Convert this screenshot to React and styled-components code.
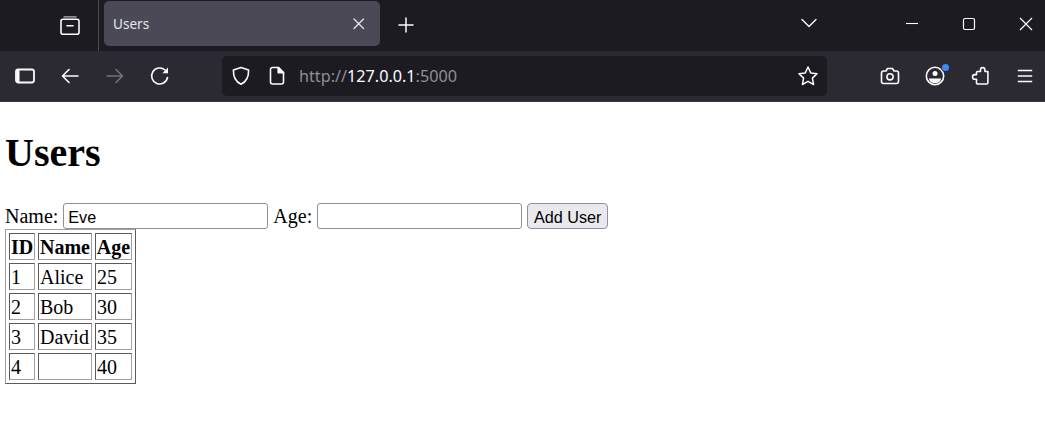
import styled, { createGlobalStyle } from "styled-components";

const users = [
  { id: 1, name: "Alice", age: 25 },
  { id: 2, name: "Bob", age: 30 },
  { id: 3, name: "David", age: 35 },
  { id: 4, name: "", age: 40 },
];

const Icon = ({ size = 20, children, ...rest }) => (
  <svg width={size} height={size} viewBox="0 0 20 20" fill="none" stroke="currentColor" strokeWidth="1.6" strokeLinecap="round" strokeLinejoin="round" {...rest}>
    {children}
  </svg>
);

const App = () => {
  return (
    <>
      <GlobalStyle />
      <Browser>
        <TabStrip>
          <ViewSlot>
            <Icon>
              <path d="M4 .8h12" strokeWidth="1.3" opacity="0.7" />
              <rect x="1" y="3.2" width="18" height="15" rx="2" />
              <path d="M7 9.8h6" />
            </Icon>
          </ViewSlot>
          <Tab>
            <TabTitle>Users</TabTitle>
            <Icon size={14} viewBox="0 0 14 14" strokeWidth="1.3">
              <path d="M2 2l9.5 9.5M11.5 2L2 11.5" />
            </Icon>
          </Tab>
          <NewTab>
            <Icon size={18} viewBox="0 0 18 18" strokeWidth="1.5">
              <path d="M9 2v14M2 9h14" />
            </Icon>
          </NewTab>
          <ListTabs>
            <Icon size={18} viewBox="0 0 18 18" strokeWidth="1.4">
              <path d="M2 5.5l7 7 7-7" />
            </Icon>
          </ListTabs>
          <WindowButton>
            <Icon size={14} viewBox="0 0 14 14" strokeWidth="1.1">
              <path d="M1 6.5h12" strokeLinecap="butt" />
            </Icon>
          </WindowButton>
          <WindowButton>
            <Icon size={14} viewBox="0 0 14 14" strokeWidth="1.2">
              <rect x="1.5" y="1.5" width="11" height="11" rx="1.5" />
            </Icon>
          </WindowButton>
          <WindowButton>
            <Icon size={14} viewBox="0 0 14 14" strokeWidth="1.2">
              <path d="M1 1l12 12M13 1L1 13" strokeLinecap="butt" />
            </Icon>
          </WindowButton>
        </TabStrip>
        <Toolbar>
          <ToolButton>
            <Icon strokeWidth="1.8">
              <rect x="1" y="3.5" width="18" height="13" rx="2.2" />
              <rect x="1.5" y="4" width="3" height="12" fill="currentColor" stroke="none" />
            </Icon>
          </ToolButton>
          <ToolButton>
            <Icon>
              <path d="M18 10H2.5M9 3.5L2.5 10 9 16.5" />
            </Icon>
          </ToolButton>
          <ToolButton $disabled>
            <Icon>
              <path d="M2 10h15.5M11 3.5l6.5 6.5-6.5 6.5" />
            </Icon>
          </ToolButton>
          <ToolButton>
            <Icon>
              <path d="M17.5 11.5A8 8 0 1 1 15 4L17 6.3" />
              <path d="M18 1.6v5.6h-5.6z" fill="currentColor" strokeWidth="0" />
            </Icon>
          </ToolButton>
          <UrlBar>
            <UrlIcon>
              <Icon>
                <path d="M10 1.5l7.6 2.6c.2 6.6-1.8 11.6-7.6 14.2C4.2 15.7 2.2 10.7 2.4 4.1z" />
              </Icon>
            </UrlIcon>
            <UrlIcon>
              <Icon>
                <path d="M3.5 3.5a2 2 0 0 1 2-2h6l5 5v9.5a2 2 0 0 1-2 2h-9a2 2 0 0 1-2-2z" />
                <path d="M11.2 1.5l5.3 5.3h-5.3z" fill="currentColor" />
              </Icon>
            </UrlIcon>
            <UrlText>
              <Dim>http://</Dim>127.0.0.1<Dim>:5000</Dim>
            </UrlText>
            <StarIcon>
              <Icon size={22} viewBox="0 0 22 22" strokeWidth="1.5">
                <path d="M11 2l2.7 5.9 6.3.8-4.6 4.4 1.2 6.4L11 16.3l-5.6 3.2 1.2-6.4L2 8.7l6.3-.8z" />
              </Icon>
            </StarIcon>
          </UrlBar>
          <Actions>
            <ToolButton>
              <Icon>
                <path d="M1.5 7a2 2 0 0 1 2-2h2.5l1.5-2.5h5L14 5h2.5a2 2 0 0 1 2 2v8.5a2 2 0 0 1-2 2h-13a2 2 0 0 1-2-2z" />
                <circle cx="10" cy="10.8" r="3.1" />
              </Icon>
            </ToolButton>
            <ToolButton>
              <Icon>
                <circle cx="10" cy="10" r="8.7" />
                <circle cx="10" cy="7.5" r="2.5" fill="currentColor" stroke="none" />
                <path d="M3.8 12.5h12.4a6.4 6.4 0 0 1-12.4 0z" fill="currentColor" stroke="none" />
              </Icon>
              <Badge />
            </ToolButton>
            <ToolButton>
              <Icon>
                <path d="M7.5 5.5h3V3.8a2.2 2.2 0 0 1 4.4 0v1.7h3v11.2a1.3 1.3 0 0 1-1.3 1.3H7.8a1.3 1.3 0 0 1-1.3-1.3v-3.5H4.8a2.3 2.3 0 0 1 0-4.6h1.7V6.5a1 1 0 0 1 1-1z" />
              </Icon>
            </ToolButton>
            <ToolButton>
              <Icon>
                <path d="M2.8 4.5h14.4M2.8 10h14.4M2.8 15.5h14.4" strokeWidth="1.4" strokeLinecap="butt" />
              </Icon>
            </ToolButton>
          </Actions>
        </Toolbar>
      </Browser>
      <Page>
        <Heading>Users</Heading>
        <UserForm onSubmit={(e) => e.preventDefault()}>
          <label htmlFor="name">Name:</label>
          <TextInput id="name" type="text" defaultValue="Eve" />
          <label htmlFor="age">Age:</label>
          <TextInput id="age" type="text" />
          <AddButton type="submit">Add User</AddButton>
        </UserForm>
        <UserTable>
          <thead>
            <tr>
              <Head $width={26}>ID</Head>
              <Head $width={54}>Name</Head>
              <Head $width={37}>Age</Head>
            </tr>
          </thead>
          <tbody>
            {users.map((user) => (
              <tr key={user.id}>
                <Cell>{user.id}</Cell>
                <Cell>{user.name}</Cell>
                <Cell>{user.age}</Cell>
              </tr>
            ))}
          </tbody>
        </UserTable>
      </Page>
    </>
  );
};

export default App;

const GlobalStyle = createGlobalStyle`
  html, body {
    margin: 0;
    background: #ffffff;
    overflow: hidden;
  }
  body {
    font-family: "Liberation Serif", "Times New Roman", serif;
    font-size: 20px;
    color: #000000;
  }
`;

const Browser = styled.div`
  width: 1045px;
  font-family: "Noto Sans", "Open Sans", sans-serif;
`;

const TabStrip = styled.div`
  height: 51px;
  background: #1c1b22;
  display: flex;
  align-items: flex-start;
  color: #fbfbfe;
`;

const ViewSlot = styled.div`
  flex: none;
  width: 99px;
  height: 51px;
  padding-left: 42px;
  box-sizing: border-box;
  border-right: 1px solid #4a4952;
  display: flex;
  align-items: center;
  justify-content: center;
`;

const Tab = styled.div`
  flex: none;
  width: 276px;
  height: 45px;
  margin: 1px 0 0 5px;
  padding: 0 14px 0 9px;
  box-sizing: border-box;
  background: #4a4955;
  border-radius: 5px;
  display: flex;
  align-items: center;
  justify-content: space-between;
  color: #e6e6ea;
`;

const TabTitle = styled.span`
  font-size: 13.6px;
`;

const NewTab = styled.div`
  flex: none;
  display: flex;
  margin: 16px 0 0 17px;
`;

const ListTabs = styled.div`
  flex: none;
  display: flex;
  margin: 14px 44px 0 385px;
`;

const WindowButton = styled.div`
  flex: none;
  display: flex;
  margin: 17px 0 0 43px;
`;

const Toolbar = styled.div`
  height: 51px;
  padding-left: 2.5px;
  box-sizing: border-box;
  background: #2b2a33;
  border-bottom: 1px solid #3a3944;
  display: flex;
  align-items: center;
  color: #fbfbfe;
  overflow: hidden;
`;

const ToolButton = styled.div`
  position: relative;
  flex: none;
  width: 45px;
  height: 40px;
  display: flex;
  align-items: center;
  justify-content: center;
  color: ${(props) => (props.$disabled ? "#72717a" : "#fbfbfe")};
`;

const Badge = styled.span`
  position: absolute;
  top: 8px;
  right: 9px;
  width: 7px;
  height: 7px;
  border-radius: 50%;
  background: #3b8cec;
  box-shadow: 0 0 0 1px #2b2a33;
`;

const UrlBar = styled.div`
  flex: none;
  width: 605px;
  height: 40px;
  margin-left: 39.5px;
  padding: 0 8px 0 9px;
  box-sizing: border-box;
  border-radius: 5px;
  background: #1c1b22;
  display: flex;
  align-items: center;
`;

const UrlIcon = styled.span`
  width: 20px;
  height: 20px;
  display: flex;

  & + & {
    margin-left: 16px;
  }
`;

const UrlText = styled.span`
  margin-left: 12px;
  font-size: 16.2px;
  color: #fbfbfe;
  flex: 1;
`;

const Dim = styled.span`
  color: #8f8e94;
`;

const StarIcon = styled.span`
  width: 22px;
  height: 22px;
  display: flex;
`;

const Actions = styled.div`
  flex: none;
  margin-left: 40.5px;
  display: flex;
`;

const Page = styled.main`
  padding: 0 5px;
`;

const Heading = styled.h1`
  margin: 0;
  padding: 28px 0 0;
  height: 101px;
  box-sizing: border-box;
  font-size: 40px;
  line-height: 46px;
  font-weight: bold;
`;

const UserForm = styled.form`
  height: 26px;
  display: flex;
  align-items: center;
  gap: 5px;
`;

const TextInput = styled.input`
  width: 205px;
  height: 26px;
  padding: 3px 4px 0;
  box-sizing: border-box;
  border: 1px solid #8f8f9d;
  border-radius: 3px;
  background: #ffffff;
  font-family: "Liberation Sans", Arial, sans-serif;
  font-size: 16.2px;
  color: #000000;
  outline: none;
`;

const AddButton = styled.button`
  width: 81px;
  height: 26px;
  padding: 3px 0 0;
  box-sizing: border-box;
  border: 1px solid #8f8f9d;
  border-radius: 4px;
  background: #e9e9ed;
  font-family: "Liberation Sans", Arial, sans-serif;
  font-size: 16.2px;
  color: #000000;
`;

const UserTable = styled.table`
  border-collapse: separate;
  border-spacing: 3px;
  border: 1px solid;
  border-color: #a0a0a0 #5a5a5a #5a5a5a #a0a0a0;
`;

const Cell = styled.td`
  height: 27px;
  padding: 2px 1px 0;
  box-sizing: border-box;
  border: 1px solid;
  border-color: #5a5a5a #a0a0a0 #a0a0a0 #5a5a5a;
  line-height: 23px;
`;

const Head = styled.th`
  width: ${(props) => props.$width}px;
  height: 27px;
  padding: 2px 0 0;
  box-sizing: border-box;
  border: 1px solid;
  border-color: #5a5a5a #a0a0a0 #a0a0a0 #5a5a5a;
  line-height: 23px;
  font-weight: bold;
`;
